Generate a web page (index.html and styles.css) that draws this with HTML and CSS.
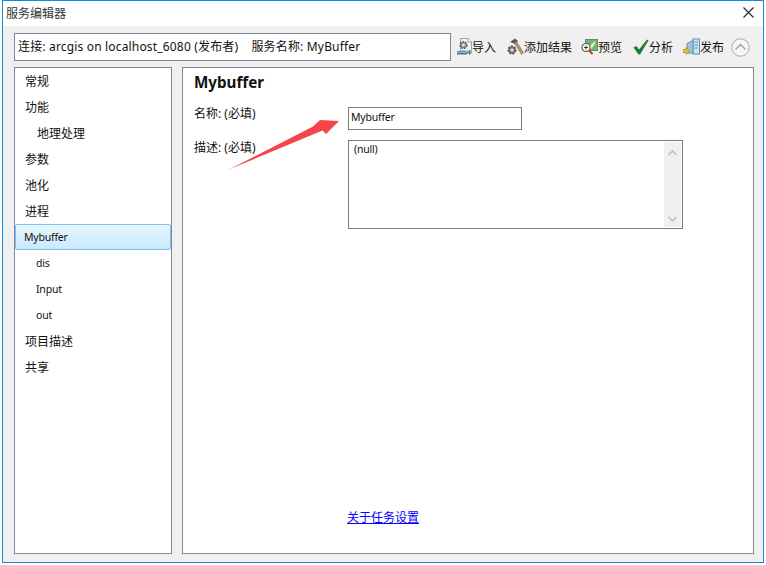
FILE: index.html
```html
<!DOCTYPE html>
<html lang="zh-CN">
<head>
    <meta charset="UTF-8">
    <title>服务编辑器</title>
    <link rel="stylesheet" href="styles.css">
</head>
<body>
    <div class="window">
        <div class="titlebar">
            <span class="title">服务编辑器</span>
            <svg class="close-icon" width="11" height="11" viewBox="0 0 11 11">
                <path d="M.5 .5L10.500 10.500M10.500 .5L.5 10.500" stroke="#222" stroke-width="1.100" fill="none"/>
            </svg>
        </div>
        <div class="content">
            <div class="toolbar">
                <div class="status-box">连接: arcgis on localhost_6080 (发布者)&nbsp;&nbsp;&nbsp; 服务名称: MyBuffer</div>
                <div class="tools">
                    <div class="tool tool-import">
                        <svg width="15" height="18" viewBox="0 0 15 18">
                            <path d="M3.500 .5H11L14.500 4V13H3.500Z" fill="#eef3f8" stroke="#8fa3b8"/>
                            <path d="M11 .5V4H14.500" fill="#fff" stroke="#8fa3b8"/>
                            <circle cx="6.500" cy="7" r="3.300" fill="#9a9f9f" stroke="#5a5a5a" stroke-width="1.600" stroke-dasharray="1.800 1"/>
                            <circle cx="6.500" cy="7" r="1.200" fill="#eee"/>
                            <path d="M0 13.500H9" stroke="#7a8a9a"/>
                            <path d="M0 15.500H10" stroke="#3f74ad" stroke-width="2"/>
                            <path d="M10 13.500H12V11.500L15 14.500L12 17.500V15.500H10Z" fill="#3aa652"/>
                        </svg>
                        <span>导入</span>
                    </div>
                    <div class="tool tool-results">
                        <svg width="17" height="18" viewBox="0 0 17 18">
                            <circle cx="5" cy="12" r="3.500" fill="#8b8b8b" stroke="#4a4a4a" stroke-width="2" stroke-dasharray="2 1"/>
                            <circle cx="5" cy="12" r="1.500" fill="#ddd"/>
                            <path d="M3 4L8 .5L11 3L8 6.500L6 5Z" fill="#555"/>
                            <path d="M7.500 5L9.500 3.500L16.500 14.500L14.500 16.500Z" fill="#b0946e" stroke="#7a6344" stroke-width=".5"/>
                        </svg>
                        <span>添加结果</span>
                    </div>
                    <div class="tool tool-preview">
                        <svg width="17" height="18" viewBox="0 0 17 18">
                            <rect x="4.500" y="1.500" width="12" height="11" fill="#6fb85f" stroke="#6f7f8f"/>
                            <path d="M7 10L14 3V6L10 11Z" fill="#e8f3d0"/>
                            <circle cx="5" cy="9.500" r="4" fill="#fff" stroke="#555" stroke-width="1.200"/>
                            <path d="M3 9.500H7M5 7.500V11.500" stroke="#333"/>
                            <path d="M8 12.500L11.500 16" stroke="#c0392b" stroke-width="2"/>
                        </svg>
                        <span>预览</span>
                    </div>
                    <div class="tool">
                        <svg width="16" height="18" viewBox="0 0 16 18">
                            <path d="M.5 9.500L3.500 8L6 11.500L14 1.500L15.500 2.500L7 16.500H5.500Z" fill="#1e7a38"/>
                        </svg>
                        <span>分析</span>
                    </div>
                    <div class="tool">
                        <svg width="17" height="18" viewBox="0 0 17 18">
                            <rect x="10" y="1" width="6.500" height="15" fill="#cfe3f3" stroke="#5f8fb8"/>
                            <path d="M11.500 4H15M11.500 7H15M11.500 10H15" stroke="#3aa0a0"/>
                            <path d="M4 5.500L10 2.500V15H4Z" fill="#9cc4e4" stroke="#5f8fb8"/>
                            <path d="M0 11.500H3V9.500L7 13L3 16.500V14.500H0Z" fill="#e6c23c" stroke="#9a7d1c" stroke-width=".6"/>
                        </svg>
                        <span>发布</span>
                    </div>
                    <svg class="collapse-icon" width="19" height="19" viewBox="0 0 19 19">
                        <circle cx="9.500" cy="9.500" r="8.700" fill="#f6f6f6" stroke="#a8a8a8"/>
                        <path d="M4.500 11.500L9.500 6.500L14.500 11.500" fill="none" stroke="#a0a0a0" stroke-width="1.300"/>
                    </svg>
                </div>
            </div>
            <div class="panels">
                <ul class="nav">
                    <li>常规</li>
                    <li>功能</li>
                    <li class="sub">地理处理</li>
                    <li>参数</li>
                    <li>池化</li>
                    <li>进程</li>
                    <li class="small active">Mybuffer</li>
                    <li class="sub small">dis</li>
                    <li class="sub small">Input</li>
                    <li class="sub small">out</li>
                    <li>项目描述</li>
                    <li>共享</li>
                </ul>
                <div class="detail">
                    <h1>Mybuffer</h1>
                    <div class="form-row name-row">
                        <label>名称: (必填)</label>
                        <div class="input">Mybuffer</div>
                    </div>
                    <div class="form-row desc-row">
                        <label>描述: (必填)</label>
                        <div class="textarea">
                            <div class="textarea-text">(null)</div>
                            <div class="scrollbar">
                                <svg width="9" height="6" viewBox="0 0 9 6"><path d="M.5 5L4.500 1L8.500 5" fill="none" stroke="#bdbdbd" stroke-width="1.500"/></svg>
                                <svg width="9" height="6" viewBox="0 0 9 6"><path d="M.5 1L4.500 5L8.500 1" fill="none" stroke="#bdbdbd" stroke-width="1.500"/></svg>
                            </div>
                        </div>
                    </div>
                    <a class="help-link" href="#">关于任务设置</a>
                    <!-- 红色箭头是后加的标注 -->
                    <svg class="arrow" width="116" height="58" viewBox="0 0 116 58">
                        <path d="M0 56.500L84 13.500L91 7L110 8L97 21L93.500 17.500Z" fill="#f5444a"/>
                    </svg>
                </div>
            </div>
        </div>
    </div>
</body>
</html>
```

FILE: styles.css
```css
* {
    margin: 0;
    padding: 0;
    box-sizing: border-box;
}

body {
    width: 766px;
    height: 565px;
    padding: 0 2px 2px 2px;
    background: #fff;
    font-family: "Noto Sans", "Noto Sans CJK SC", sans-serif;
    font-size: 12px;
    color: #111;
    overflow: hidden;
}

.window {
    display: flex;
    flex-direction: column;
    height: 563px;
    border: 1px solid #0f8ae0;
    background: #f0f0f0;
}

.titlebar {
    display: flex;
    align-items: center;
    justify-content: space-between;
    flex: none;
    height: 25px;
    padding: 0 9px 2px 3px;
    background: #fff;
}

.title {
    color: #333;
}

.content {
    display: flex;
    flex-direction: column;
    flex: 1;
    padding: 7px 9px 8px 11px;
    gap: 6px;
}

.toolbar {
    display: flex;
    align-items: center;
    flex: none;
    height: 28px;
}

.status-box {
    flex: none;
    width: 437px;
    height: 28px;
    padding-left: 3px;
    line-height: 25px;
    letter-spacing: .17px;
    background: #fff;
    border: 1px solid #85859a;
    white-space: nowrap;
}

.tools {
    display: flex;
    flex: none;
    align-items: center;
    margin-left: 6px;
    gap: 10px;
}

.tool {
    display: flex;
    align-items: center;
    color: #111;
    white-space: nowrap;
}

.tool-import {
    margin-right: 1px;
}

.tool-results {
    margin-right: -1px;
}

.tool-preview {
    margin-right: 1px;
}

.collapse-icon {
    margin-left: -3px;
}

.panels {
    display: flex;
    flex: 1;
    gap: 10px;
}

.nav {
    width: 158px;
    list-style: none;
    background: #fff;
    border: 1px solid #85859a;
    padding-top: 1px;
}

.nav li {
    height: 26px;
    padding-left: 10px;
    line-height: 25px;
}

.nav .sub {
    padding-left: 22px;
}

.nav .small {
    font-size: 10.5px;
    letter-spacing: -.2px;
    line-height: 25px;
}

.nav .sub.small {
    padding-left: 21px;
}

.nav .active {
    margin: -1px 0 1px;
    padding-left: 8px;
    background: linear-gradient(#e6f5fd, #c8ebfc);
    border: 1px solid #7cc0f2;
    border-radius: 2px;
    line-height: 24px;
}

.detail {
    position: relative;
    flex: 1;
    padding: 4px 11px 0 11px;
    background: #fff;
    border: 1px solid #85859a;
}

.detail h1 {
    font-size: 15.2px;
    font-weight: bold;
    line-height: 20px;
    margin-bottom: 13px;
}

.form-row {
    display: flex;
    align-items: flex-start;
}

.name-row {
    margin-bottom: 10px;
}

.form-row label {
    width: 154px;
    line-height: 17px;
}

.desc-row label {
    margin-top: -1px;
}

.input {
    width: 174px;
    height: 23px;
    margin-top: 2px;
    padding-left: 2px;
    font-size: 10.5px;
    letter-spacing: -.2px;
    line-height: 18px;
    border: 1px solid #7a7a7a;
}

.textarea {
    display: flex;
    justify-content: space-between;
    width: 335px;
    height: 89px;
    border: 1px solid #7a7a7a;
}

.textarea-text {
    padding: 1px 0 0 5px;
    font-size: 10.5px;
    letter-spacing: -.2px;
}

.scrollbar {
    display: flex;
    flex-direction: column;
    align-items: center;
    justify-content: space-between;
    width: 17px;
    padding: 8px 0 5px;
    margin: 1px;
    background: #f0f0f0;
}

.help-link {
    position: absolute;
    left: 164px;
    top: 440px;
    color: #0000ff;
    text-decoration: underline;
}

.arrow {
    position: absolute;
    left: 46px;
    top: 45px;
}
```
